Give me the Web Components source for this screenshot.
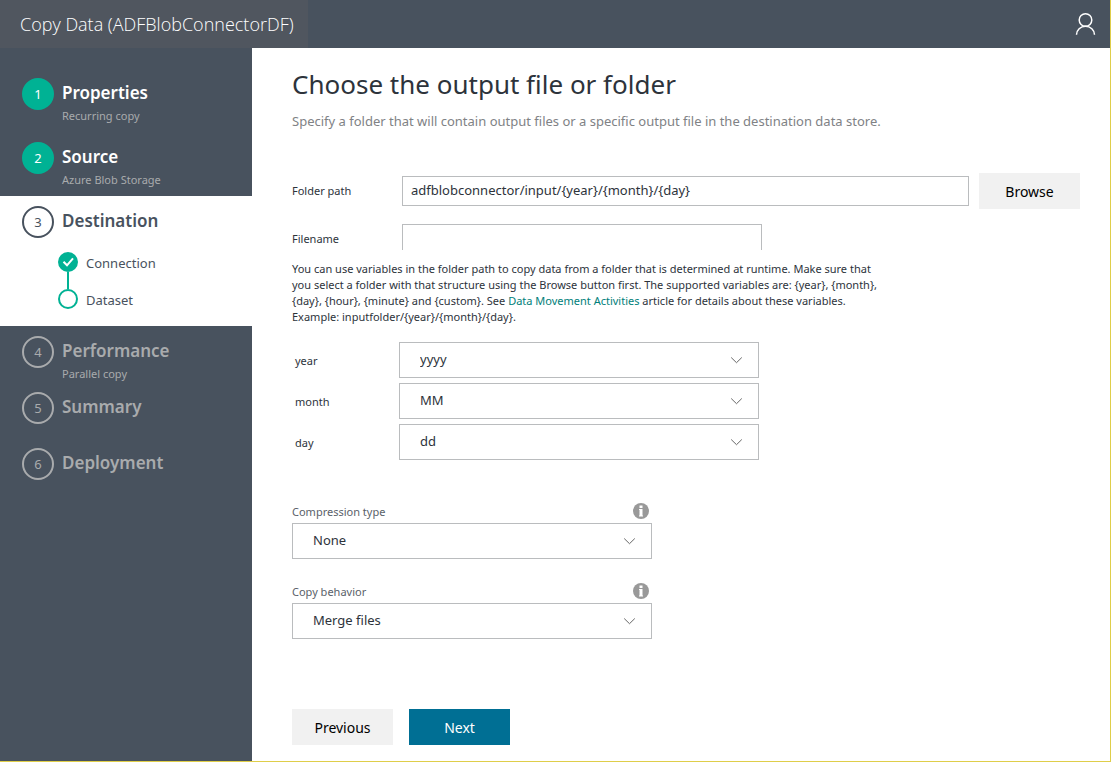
<!DOCTYPE html>
<html lang="en">
<head>
<meta charset="utf-8">
<title>Copy Data</title>
<style>
  body { margin: 0; font: 13px/20px "Noto Sans", "Open Sans", sans-serif; color: #2d333b; background: #fff; }
</style>
</head>
<body>
<copy-wizard>
  <wizard-header slot="header">Copy Data (ADFBlobConnectorDF)</wizard-header>
  <wizard-step slot="steps" number="1" state="done" heading="Properties" note="Recurring copy"></wizard-step>
  <wizard-step slot="steps" number="2" state="done" heading="Source" note="Azure Blob Storage"></wizard-step>
  <wizard-step slot="steps" number="3" state="active" heading="Destination">
    <sub-step done>Connection</sub-step>
    <sub-step>Dataset</sub-step>
  </wizard-step>
  <wizard-step slot="steps" number="4" heading="Performance" note="Parallel copy"></wizard-step>
  <wizard-step slot="steps" number="5" heading="Summary"></wizard-step>
  <wizard-step slot="steps" number="6" heading="Deployment"></wizard-step>
  <output-form></output-form>
</copy-wizard>

<script>
const define = (name, html, setup) => {
  const template = document.createElement('template');
  template.innerHTML = html;
  customElements.define(name, class extends HTMLElement {
    connectedCallback() {
      if (this.shadowRoot) return;
      const root = this.attachShadow({ mode: 'open' });
      root.append(template.content.cloneNode(true));
      if (setup) setup(this, root);
    }
  });
};

define('copy-wizard', `
  <style>
    :host { display: grid; grid-template: auto 1fr / 252px 1fr; min-height: 100vh; box-sizing: border-box;
      border: solid #dfce4a; border-width: 0 1px 1px 0; }
    .top { grid-column: 1 / -1; }
    nav { background: #48525e; padding-top: 20px; }
    main { padding: 18px 30px 16px 40px; min-width: 0; }
  </style>
  <div class="top"><slot name="header"></slot></div>
  <nav><slot name="steps"></slot></nav>
  <main><slot></slot></main>`);

define('wizard-header', `
  <style>
    :host { display: flex; justify-content: space-between; align-items: center; height: 48px; background: #48525e; color: #fff; }
    .title { font: 300 18px/48px "Open Sans", sans-serif; padding: 0 14px 0 20px; background: #50565f; }
    button { border: 0; background: none; padding: 0; margin-right: 14px; width: 22px; height: 24px; }
    svg { display: block; }
  </style>
  <div class="title"><slot></slot></div>
  <button aria-label="Account">
    <svg width="22" height="24" viewBox="0 0 22 24" fill="none" stroke="#fff" stroke-width="1.5">
      <circle cx="11.500" cy="8" r="6.300"/><path d="M2.500 22.800a9 8.500 0 0 1 18 0"/>
    </svg>
  </button>`);

define('wizard-step', `
  <style>
    :host { display: grid; grid-template-columns: 32px 1fr; column-gap: 8px; align-content: start; box-sizing: border-box;
      min-height: 56px; padding: 10px 10px 0 22px; color: #a9abad; }
    :host([state=done]) { padding-bottom: 8px; color: #fff; }
    :host([state=active]) { background: #fff; color: #48525e; padding-bottom: 17px; }
    .num { box-sizing: border-box; width: 32px; height: 32px; border: 2px solid; border-radius: 50%;
      text-align: center; line-height: 28px; }
    :host([state=done]) .num { background: #00b294; border-color: #00b294; }
    .heading { font-size: 17px; line-height: 30px; font-weight: 600; }
    .note { font-size: 11px; line-height: 16px; color: #a9abad; }
    .note:empty { display: none; }
    .subs { grid-column: 1 / -1; margin: 14px 0 0 36px; display: grid; row-gap: 17px; }
    :host(:not([state=active])) .subs { display: none; }
  </style>
  <div class="num"></div>
  <div><div class="heading"></div><div class="note"></div></div>
  <div class="subs"><slot></slot></div>`,
  (el, root) => {
    root.querySelector('.num').textContent = el.getAttribute('number');
    root.querySelector('.heading').textContent = el.getAttribute('heading');
    root.querySelector('.note').textContent = el.getAttribute('note') || '';
  });

define('sub-step', `
  <style>
    :host { display: grid; grid-template-columns: 20px 1fr; column-gap: 8px; height: 20px; }
    svg { display: block; overflow: visible; }
    .check, .link { display: none; }
    :host([done]) .check, :host([done]) .link { display: inline; }
    :host([done]) circle { fill: #00b294; }
    span { line-height: 22px; }
  </style>
  <svg width="20" height="20" viewBox="0 0 20 20" fill="none">
    <path class="link" d="M10 20v17" stroke="#00b294" stroke-width="2"/>
    <circle cx="10" cy="10" r="9" stroke="#00b294" stroke-width="2"/>
    <path class="check" d="M5.500 9.800l3.500 3.500 6-7" stroke="#fff" stroke-width="2"/>
  </svg>
  <span><slot></slot></span>`);

define('push-button', `
  <style>
    :host { display: block; }
    button { display: block; width: 101px; height: 36px; border: 0; padding: 1px 0 0; background: #f1f1f1; color: #000; font: inherit; font-size: 14px; }
    :host([primary]) button { background: #006f94; color: #fff; }
  </style>
  <button type="button"><slot></slot></button>`);

define('text-field', `
  <style>
    :host { display: grid; grid-template-columns: 110px 1fr; align-items: center; }
    label { font-size: 11px; }
    input { box-sizing: border-box; width: 100%; height: 30px; border: 1px solid #babcbe; padding: 0 8px 2px; font: inherit; color: inherit; background: #fff; outline: 0; border-radius: 0; }
    :host([open-bottom]) input { height: 26px; border-bottom: 0; }
    :host([open-bottom]) label { padding-top: 4px; }
  </style>
  <label for="field"></label><input id="field" type="text">`,
  (el, root) => {
    root.querySelector('label').textContent = el.getAttribute('label');
    root.querySelector('input').value = el.getAttribute('value') || '';
  });

define('drop-down', `
  <style>
    :host { display: grid; width: 360px; max-width: 100%; }
    :host([inline]) { grid-template-columns: 104px 360px; width: 464px; align-items: center; }
    .caption { display: flex; justify-content: space-between; align-items: center; height: 24px; padding-right: 3px; color: #5a6169; }
    label { font-size: 11px; padding-top: 2px; }
    :host([inline]) .caption { color: inherit; padding: 0; }
    :host([inline]) .info { display: none; }
    .box { display: grid; align-items: center; }
    .box > * { grid-area: 1 / 1; }
    select { appearance: none; box-sizing: border-box; width: 100%; height: 36px; border: 1px solid #babcbe; border-radius: 0;
      background: #fff; padding: 0 36px 2px 20px; font: inherit; color: inherit; outline: 0; }
    .chevron { justify-self: end; margin-right: 16px; pointer-events: none; }
  </style>
  <div class="caption">
    <label for="choice"></label>
    <svg class="info" width="16" height="16" viewBox="0 0 16 16" role="img" aria-label="Information">
      <circle cx="8" cy="8" r="8" fill="#999"/>
      <path d="M6.500 2.500h3v2.500h-3zM6 6h3.500v6.500h.5v1H6v-1h.5V7H6z" fill="#fff"/>
    </svg>
  </div>
  <div class="box">
    <select id="choice"></select>
    <svg class="chevron" width="12" height="8" viewBox="0 0 12 8" fill="none" stroke="#666"><path d="M.200 1.500l5.300 5.200 5.300-5.200"/></svg>
  </div>`,
  (el, root) => {
    root.querySelector('label').textContent = el.getAttribute('label');
    root.querySelector('select').add(new Option(el.getAttribute('value')));
  });

define('output-form', `
  <style>
    :host { display: block; }
    h1 { margin: 0; font-size: 26px; line-height: 36px; font-weight: 400; }
    .lead { margin: 9px 0 42px; color: #808285; }
    .path { display: grid; grid-template-columns: 1fr auto; column-gap: 10px; align-items: center; }
    .name { width: 470px; margin-top: 15px; }
    .help { margin: 11px 0 17px; max-width: 600px; font-size: 11px; line-height: 16px; }
    a { color: #00807a; text-decoration: none; }
    .variables { display: grid; row-gap: 5px; padding-left: 3px; }
    .options { display: grid; row-gap: 20px; margin-top: 39px; }
    .actions { display: flex; gap: 16px; margin-top: 70px; }
  </style>
  <h1>Choose the output file or folder</h1>
  <p class="lead">Specify a folder that will contain output files or a specific output file in the destination data store.</p>
  <div class="path">
    <text-field label="Folder path" value="adfblobconnector/input/{year}/{month}/{day}"></text-field>
    <push-button>Browse</push-button>
  </div>
  <text-field class="name" label="Filename" open-bottom></text-field>
  <p class="help">You can use variables in the folder path to copy data from a folder that is determined at runtime. Make sure that<br>
    you select a folder with that structure using the Browse button first. The supported variables are: {year}, {month},<br>
    {day}, {hour}, {minute} and {custom}. See <a href="#activities">Data Movement Activities</a> article for details about these variables.<br>
    Example: inputfolder/{year}/{month}/{day}.</p>
  <div class="variables">
    <drop-down inline label="year" value="yyyy"></drop-down>
    <drop-down inline label="month" value="MM"></drop-down>
    <drop-down inline label="day" value="dd"></drop-down>
  </div>
  <div class="options">
    <drop-down label="Compression type" value="None"></drop-down>
    <drop-down label="Copy behavior" value="Merge files"></drop-down>
  </div>
  <div class="actions">
    <push-button>Previous</push-button>
    <push-button primary>Next</push-button>
  </div>`);
</script>
</body>
</html>
